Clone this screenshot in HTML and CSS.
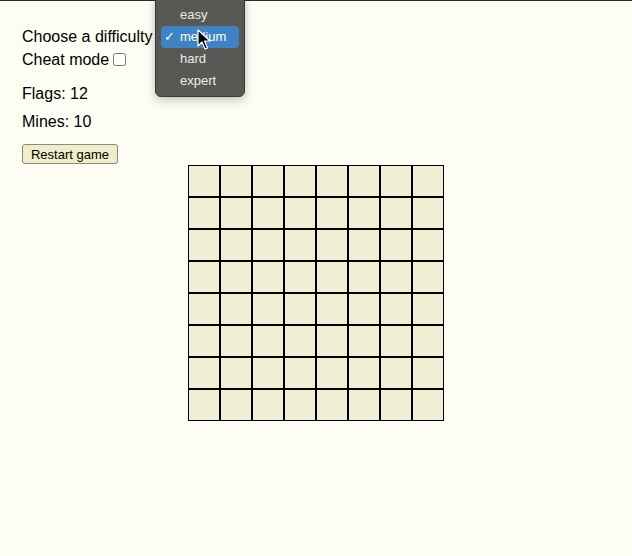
FILE: index.html
```html
<!DOCTYPE html>
<html>
<head>
<meta charset="utf-8">
<link rel="stylesheet" href="styles.css">
</head>
<body>
<div class="topline"></div>
<div class="page">
  <div class="row">Choose a difficulty <select class="diff"><option>easy</option><option selected>medium</option><option>hard</option><option>expert</option></select></div>
  <div class="row">Cheat mode <input type="checkbox" class="cheat"></div>
  <div class="stat flags">Flags: 12</div>
  <div class="stat mines">Mines: 10</div>
  <button class="restart">Restart game</button>
</div>
<div class="board">
  <div class="cell"></div><div class="cell"></div><div class="cell"></div><div class="cell"></div><div class="cell"></div><div class="cell"></div><div class="cell"></div><div class="cell"></div>
  <div class="cell"></div><div class="cell"></div><div class="cell"></div><div class="cell"></div><div class="cell"></div><div class="cell"></div><div class="cell"></div><div class="cell"></div>
  <div class="cell"></div><div class="cell"></div><div class="cell"></div><div class="cell"></div><div class="cell"></div><div class="cell"></div><div class="cell"></div><div class="cell"></div>
  <div class="cell"></div><div class="cell"></div><div class="cell"></div><div class="cell"></div><div class="cell"></div><div class="cell"></div><div class="cell"></div><div class="cell"></div>
  <div class="cell"></div><div class="cell"></div><div class="cell"></div><div class="cell"></div><div class="cell"></div><div class="cell"></div><div class="cell"></div><div class="cell"></div>
  <div class="cell"></div><div class="cell"></div><div class="cell"></div><div class="cell"></div><div class="cell"></div><div class="cell"></div><div class="cell"></div><div class="cell"></div>
  <div class="cell"></div><div class="cell"></div><div class="cell"></div><div class="cell"></div><div class="cell"></div><div class="cell"></div><div class="cell"></div><div class="cell"></div>
  <div class="cell"></div><div class="cell"></div><div class="cell"></div><div class="cell"></div><div class="cell"></div><div class="cell"></div><div class="cell"></div><div class="cell"></div>
</div>
<div class="menu">
  <div class="item">easy</div>
  <div class="item active"><span class="check">✓</span>medium</div>
  <div class="item">hard</div>
  <div class="item">expert</div>
</div>
<svg class="cursor" width="14" height="22" viewBox="0 0 14 22">
  <path d="M1 1 L1 17 L5 13 L8 20 L10.5 19 L7.5 12 L13 12 Z" fill="#000" stroke="#fff" stroke-width="1.2" stroke-linejoin="round"/>
</svg>
</body>
</html>
```
FILE: styles.css
```css
html, body {
  margin: 0;
  padding: 0;
}
body {
  background: #fdfdf3;
  font-family: "Liberation Sans", Arial, sans-serif;
  font-size: 16px;
  color: #000;
  width: 632px;
  height: 556px;
  position: relative;
  overflow: hidden;
}
.topline {
  height: 1px;
  background: #2a2a2a;
}
.page {
  padding: 24px 0 0 22px;
}
.row {
  height: 23px;
  line-height: 23px;
  display: flex;
  align-items: center;
}
.diff {
  margin-left: 4px;
  font-size: 13px;
}
.cheat {
  width: 13px;
  height: 13px;
  margin: 0 0 0 4px;
}
.stat {
  line-height: 18px;
}
.flags {
  margin-top: 14px;
}
.mines {
  margin-top: 10px;
}
.restart {
  margin-top: 13px;
  width: 96px;
  height: 20px;
  padding: 0;
  font-family: "Liberation Sans", Arial, sans-serif;
  font-size: 13px;
  color: #000;
  background: #efeec8;
  border: 1px solid #8a8a80;
  border-radius: 3px;
  display: block;
}
.board {
  width: 256px;
  margin: 1px auto 0;
  display: grid;
  grid-template-columns: repeat(8, 32px);
  grid-auto-rows: 32px;
}
.cell {
  border: 1px solid #000;
  background: #f0efd3;
}
.menu {
  position: absolute;
  left: 155px;
  top: -6px;
  width: 90px;
  height: 103px;
  box-sizing: border-box;
  padding: 9px 5px 0 5px;
  background: #585855;
  border: 1px solid #3a3a38;
  border-radius: 6px;
  box-shadow: 0 3px 10px rgba(0,0,0,0.25);
  font-family: "Liberation Sans", Arial, sans-serif;
  font-size: 13px;
  color: #ececea;
}
.item {
  height: 22px;
  line-height: 22px;
  padding-left: 19px;
  position: relative;
  border-radius: 4px;
}
.item.active {
  background: #3d84c6;
  color: #fff;
}
.check {
  position: absolute;
  left: 3px;
  top: 0;
  font-family: "DejaVu Sans", sans-serif;
  font-size: 13px;
}
.cursor {
  position: absolute;
  left: 197px;
  top: 29px;
}
```
